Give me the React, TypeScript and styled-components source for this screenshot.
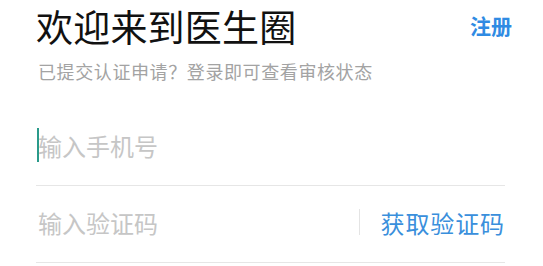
import React from 'react';
import styled, { createGlobalStyle } from 'styled-components';

const GlobalStyle = createGlobalStyle`
  html, body {
    margin: 0;
    padding: 0;
    background: #fff;
  }
  body {
    font-family: "Noto Sans CJK SC", "Noto Sans", sans-serif;
  }
  * {
    box-sizing: border-box;
  }
`;

const Page = styled.div`
  width: 543px;
  height: 266px;
  overflow: hidden;
  padding: 0 31px 0 36px;
`;

const Header = styled.div`
  display: flex;
  justify-content: space-between;
  align-items: flex-start;
  padding-top: 7px;
`;

const Title = styled.h1`
  margin: 0;
  font-size: 37px;
  line-height: 38px;
  font-weight: 400;
  color: #111;
  letter-spacing: 0.2px;
`;

const RegisterLink = styled.a`
  font-size: 21px;
  line-height: 26px;
  margin-top: 5px;
  font-weight: 700;
  color: #2f8be3;
  text-decoration: none;
  cursor: pointer;
`;

const Subtitle = styled.p`
  margin: 14px 0 0 2px;
  font-size: 18px;
  line-height: 24px;
  color: #a3a3a3;
  letter-spacing: 0.6px;
`;

const Form = styled.div`
  margin: 26px 7px 0 0;
`;

const Field = styled.div`
  position: relative;
  display: flex;
  align-items: center;
  height: 77px;
  padding-bottom: 4px;
  border-bottom: 1px solid #e6e6e6;
`;

const Input = styled.input`
  flex: 1;
  min-width: 0;
  border: none;
  outline: none;
  background: transparent;
  padding: 0 0 0 2px;
  font-family: inherit;
  font-size: 24px;
  color: #333;

  &::placeholder {
    color: #c6c6c6;
  }
`;

const Caret = styled.span`
  position: absolute;
  left: 1px;
  top: 19px;
  width: 2px;
  height: 34px;
  background: #2a9a8a;
`;

const Divider = styled.span`
  width: 1px;
  height: 26px;
  background: #e4e4e4;
  margin-right: 21px;
`;

const CodeButton = styled.button`
  border: none;
  background: transparent;
  padding: 0;
  font-family: inherit;
  font-size: 24px;
  color: #3a8fdc;
  cursor: pointer;
  letter-spacing: 0.9px;
`;

const App = () => {
  return (
    <>
      <GlobalStyle />
      <Page>
        <Header>
          <Title>欢迎来到医生圈</Title>
          <RegisterLink>注册</RegisterLink>
        </Header>
        <Subtitle>已提交认证申请？登录即可查看审核状态</Subtitle>
        <Form>
          <Field>
            <Caret />
            <Input placeholder="输入手机号" />
          </Field>
          <Field>
            <Input placeholder="输入验证码" />
            <Divider />
            <CodeButton>获取验证码</CodeButton>
          </Field>
        </Form>
      </Page>
    </>
  );
};

export default App;
